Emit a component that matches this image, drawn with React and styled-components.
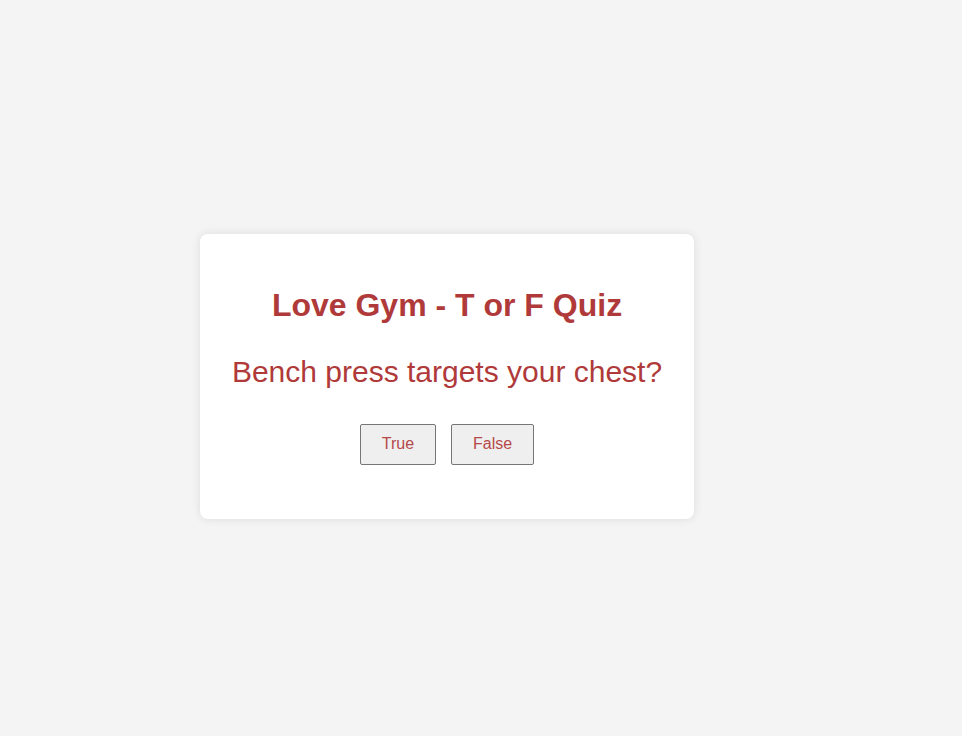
import React, { useState } from "react";
import styled, { createGlobalStyle } from "styled-components";

const GlobalStyle = createGlobalStyle`
  html, body {
    margin: 0;
    padding: 0;
    background: #f4f4f4;
    font-family: "Liberation Sans", Arial, sans-serif;
  }
`;

const questions = [
  { text: "Bench press targets your chest?", answer: true },
  { text: "Squats mainly work your biceps?", answer: false },
];

const App = () => {
  const [current, setCurrent] = useState(0);
  const [score, setScore] = useState(0);

  const handleAnswer = (value) => {
    if (questions[current].answer === value) {
      setScore(score + 1);
    }
    setCurrent((current + 1) % questions.length);
  };

  return (
    <Page>
      <GlobalStyle />
      <Card>
        <Title>Love Gym - T or F Quiz</Title>
        <Question>{questions[current].text}</Question>
        <Buttons>
          <AnswerButton onClick={() => handleAnswer(true)}>True</AnswerButton>
          <AnswerButton onClick={() => handleAnswer(false)}>False</AnswerButton>
        </Buttons>
      </Card>
    </Page>
  );
};

export default App;

const Page = styled.div`
  min-height: 100vh;
  box-sizing: border-box;
  padding: 17px 0 0 200px;
  display: flex;
  align-items: center;
`;

const Card = styled.div`
  width: 494px;
  box-sizing: border-box;
  background: #ffffff;
  border-radius: 8px;
  box-shadow: 0 0 10px rgba(0, 0, 0, 0.1);
  padding: 53px 20px 54px;
  text-align: center;
  color: #b03a3a;
`;

const Title = styled.h1`
  margin: 0 0 31px;
  font-size: 32px;
  font-weight: 700;
`;

const Question = styled.p`
  margin: 0 0 35px;
  font-size: 30px;
`;

const Buttons = styled.div`
  display: flex;
  justify-content: center;
  gap: 15px;
`;

const AnswerButton = styled.button`
  font-family: "Liberation Sans", Arial, sans-serif;
  font-size: 16px;
  color: #b5494a;
  background: #efefef;
  border: 1px solid #767676;
  border-radius: 2px;
  padding: 10px 21px 11px;
  cursor: pointer;
`;
